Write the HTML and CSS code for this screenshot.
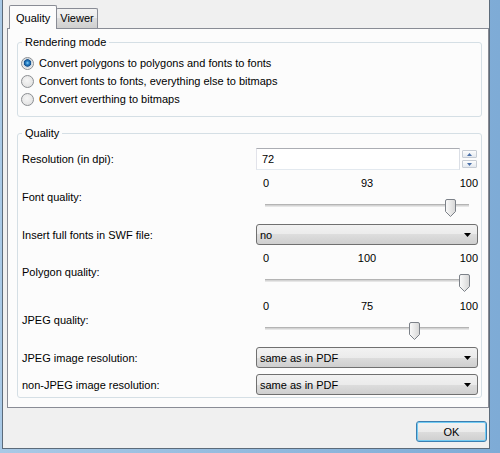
FILE: index.html
```html
<!DOCTYPE html>
<html lang="en">
<head>
    <meta charset="UTF-8">
    <title>Quality</title>
    <link rel="stylesheet" href="styles.css">
</head>
<body>
    <div class="frame">
        <div class="dialog">
            <div class="tabs">
                <div class="tab tab-active">Quality</div>
                <div class="tab">Viewer</div>
            </div>
            <div class="pane">
                <fieldset class="group group-render">
                    <legend>Rendering mode</legend>
                    <div class="radio"><span class="radio-mark checked"></span>Convert polygons to polygons and fonts to fonts</div>
                    <div class="radio"><span class="radio-mark"></span>Convert fonts to fonts, everything else to bitmaps</div>
                    <div class="radio"><span class="radio-mark"></span>Convert everthing to bitmaps</div>
                </fieldset>

                <fieldset class="group group-quality">
                    <legend>Quality</legend>
                    <div class="form">
                        <div class="form-label">Resolution (in dpi):</div>
                        <div class="spin">
                            <div class="spin-field">72</div>
                            <div class="spin-buttons">
                                <div class="spin-btn"><svg width="5" height="3" viewBox="0 0 5 3"><path d="M0 3L2.5 0 5 3z" fill="#4a6fa8"/></svg></div>
                                <div class="spin-btn"><svg width="5" height="3" viewBox="0 0 5 3"><path d="M0 0h5L2.5 3z" fill="#4a6fa8"/></svg></div>
                            </div>
                        </div>

                        <div class="form-label">Font quality:</div>
                        <div class="slider">
                            <div class="slider-scale"><span>0</span><span>93</span><span>100</span></div>
                            <div class="slider-body">
                                <div class="slider-groove"></div>
                                <div class="slider-rail">
                                    <svg class="slider-handle" style="left: 93%" width="11" height="18" viewBox="0 0 11 18">
                                        <defs><linearGradient id="hg1" x1="0" y1="0" x2="1" y2="0"><stop offset="0" stop-color="#fbfbfb"/><stop offset="1" stop-color="#d6d6d6"/></linearGradient></defs>
                                        <path d="M2 .5h7A1.5 1.5 0 0 1 10.5 2v10.5l-5 5-5-5V2A1.5 1.5 0 0 1 2 .5z" fill="url(#hg1)" stroke="#7c8188"/>
                                    </svg>
                                </div>
                            </div>
                        </div>

                        <div class="form-label">Insert full fonts in SWF file:</div>
                        <div class="combo"><span>no</span><svg width="7" height="4" viewBox="0 0 7 4"><path d="M0 0h7L3.5 4z" fill="#000"/></svg></div>

                        <div class="form-label">Polygon quality:</div>
                        <div class="slider">
                            <div class="slider-scale"><span>0</span><span>100</span><span>100</span></div>
                            <div class="slider-body">
                                <div class="slider-groove"></div>
                                <div class="slider-rail">
                                    <svg class="slider-handle" style="left: 100%" width="11" height="18" viewBox="0 0 11 18">
                                        <defs><linearGradient id="hg2" x1="0" y1="0" x2="1" y2="0"><stop offset="0" stop-color="#fbfbfb"/><stop offset="1" stop-color="#d6d6d6"/></linearGradient></defs>
                                        <path d="M2 .5h7A1.5 1.5 0 0 1 10.5 2v10.5l-5 5-5-5V2A1.5 1.5 0 0 1 2 .5z" fill="url(#hg2)" stroke="#7c8188"/>
                                    </svg>
                                </div>
                            </div>
                        </div>

                        <div class="form-label">JPEG quality:</div>
                        <div class="slider">
                            <div class="slider-scale"><span>0</span><span>75</span><span>100</span></div>
                            <div class="slider-body">
                                <div class="slider-groove"></div>
                                <div class="slider-rail">
                                    <svg class="slider-handle" style="left: 75%" width="11" height="18" viewBox="0 0 11 18">
                                        <defs><linearGradient id="hg3" x1="0" y1="0" x2="1" y2="0"><stop offset="0" stop-color="#fbfbfb"/><stop offset="1" stop-color="#d6d6d6"/></linearGradient></defs>
                                        <path d="M2 .5h7A1.5 1.5 0 0 1 10.5 2v10.5l-5 5-5-5V2A1.5 1.5 0 0 1 2 .5z" fill="url(#hg3)" stroke="#7c8188"/>
                                    </svg>
                                </div>
                            </div>
                        </div>

                        <div class="form-label">JPEG image resolution:</div>
                        <div class="combo"><span>same as in PDF</span><svg width="7" height="4" viewBox="0 0 7 4"><path d="M0 0h7L3.5 4z" fill="#000"/></svg></div>

                        <div class="form-label">non-JPEG image resolution:</div>
                        <div class="combo"><span>same as in PDF</span><svg width="7" height="4" viewBox="0 0 7 4"><path d="M0 0h7L3.5 4z" fill="#000"/></svg></div>
                    </div>
                </fieldset>
            </div>
            <div class="buttons">
                <button class="btn-ok">OK</button>
            </div>
        </div>
    </div>
</body>
</html>
```

FILE: styles.css
```css
body {
    margin: 0;
    font-family: "Liberation Sans", Arial, sans-serif;
    font-size: 11px;
    color: #000;
}
.frame {
    width: 500px;
    height: 453px;
    box-sizing: border-box;
    padding: 0 10px 4px 2px;
    background: linear-gradient(90deg, #a9c9e6, #7eabd6);
    display: flex;
}
.dialog {
    flex: 1;
    display: flex;
    flex-direction: column;
    background: #f0f0f0;
    border: 1px solid #5c6b7a;
    border-top: none;
}

/* tabs */
.tabs {
    height: 29px;
    margin-bottom: -1px;
    padding-left: 6px;
    display: flex;
    align-items: flex-end;
    position: relative;
    z-index: 1;
}
.tab {
    height: 19px;
    line-height: 19px;
    padding: 0 3px;
    margin-bottom: 1px;
    margin-left: -1px;
    border: 1px solid #898c95;
    border-bottom: none;
    border-radius: 2px 2px 0 0;
    background: linear-gradient(#f3f3f3, #ebebeb 50%, #dddddd 50%, #cfcfcf);
}
.tab-active {
    height: 23px;
    line-height: 24px;
    padding: 0 6px;
    margin: 0;
    background: #fcfcfc;
}
.pane {
    margin-left: 4px;
    height: 380px;
    box-sizing: border-box;
    border: 1px solid #898c95;
    background: #fcfcfc;
    padding: 7px 6px 0 9px;
}

/* group boxes */
.group {
    margin: 0;
    border: 1px solid #d5dfe5;
    border-radius: 3px;
    padding: 0 3px 0 4px;
}
.group legend {
    padding: 0 3px;
    line-height: 13px;
}
.group-render {
    padding-top: 5px;
    padding-bottom: 8px;
}
.group-quality {
    margin-top: 10px;
    padding-top: 8px;
    padding-bottom: 2px;
}
.radio {
    height: 18px;
    display: flex;
    align-items: center;
    gap: 5px;
}
.radio-mark {
    width: 13px;
    height: 13px;
    box-sizing: border-box;
    margin-left: -1px;
    border: 1px solid #8b8e92;
    border-radius: 50%;
    background: radial-gradient(circle at 45% 40%, #f6f6f6, #dcdcdc);
}
.radio-mark.checked {
    background: radial-gradient(circle at 50% 45%, #8fd2f8 0, #2a86cc 1.6px, #134f8d 3.4px, #c9d3dc 4px, #eeeeee 5.5px);
}

/* form */
.form {
    display: grid;
    grid-template-columns: 234px 1fr;
    row-gap: 6px;
    align-items: center;
}
.spin {
    height: 22px;
    display: flex;
    gap: 2px;
}
.spin-field {
    width: 204px;
    box-sizing: border-box;
    border: 1px solid #abadb3;
    border-color: #abadb3 #dbdfe6 #e3e9ef #e2e3ea;
    background: #fff;
    padding-left: 5px;
    display: flex;
    align-items: center;
}
.spin-buttons {
    display: flex;
    flex-direction: column;
    justify-content: center;
    gap: 2px;
}
.spin-btn {
    width: 15px;
    height: 8px;
    box-sizing: border-box;
    border: 1px solid #c6ccd4;
    border-radius: 1px;
    background: linear-gradient(#fdfdfd, #e4e9ef);
    display: flex;
    align-items: center;
    justify-content: center;
}
.combo {
    height: 21px;
    box-sizing: border-box;
    border: 1px solid #707070;
    border-radius: 3px;
    background: linear-gradient(#f2f2f2, #ebebeb 50%, #dddddd 50%, #cfcfcf);
    padding: 0 6px 0 3px;
    display: flex;
    align-items: center;
    justify-content: space-between;
}
.slider {
    height: 42px;
}
.slider-scale {
    display: grid;
    grid-template-columns: 1fr auto 1fr;
    height: 14px;
    line-height: 14px;
}
.slider-scale span:first-child {
    padding-left: 7px;
}
.slider-scale span:last-child {
    text-align: right;
}
.slider-body {
    position: relative;
    height: 28px;
    box-sizing: border-box;
    padding: 14px 9px 0;
}
.slider-groove {
    height: 1px;
    border-top: 1px solid #b4b4b4;
    border-bottom: 1px solid #e6e6e6;
    background: #d4d4d4;
}
.slider-rail {
    position: absolute;
    left: 7px;
    right: 14px;
    top: 9px;
    height: 18px;
}
.slider-handle {
    position: absolute;
    top: 0;
    margin-left: -5px;
}

/* buttons */
.buttons {
    flex: 1;
    display: flex;
    justify-content: flex-end;
    align-items: flex-start;
    padding: 13px 2px 0 0;
}
.btn-ok {
    width: 71px;
    height: 21px;
    padding: 0;
    font: inherit;
    color: #000;
    border: 1px solid #3c7fb1;
    border-radius: 3px;
    background: linear-gradient(#f2f2f2, #ebebeb 50%, #dddddd 50%, #cfcfcf);
    box-shadow: inset 0 0 0 1px #72cbf3;
}
```
